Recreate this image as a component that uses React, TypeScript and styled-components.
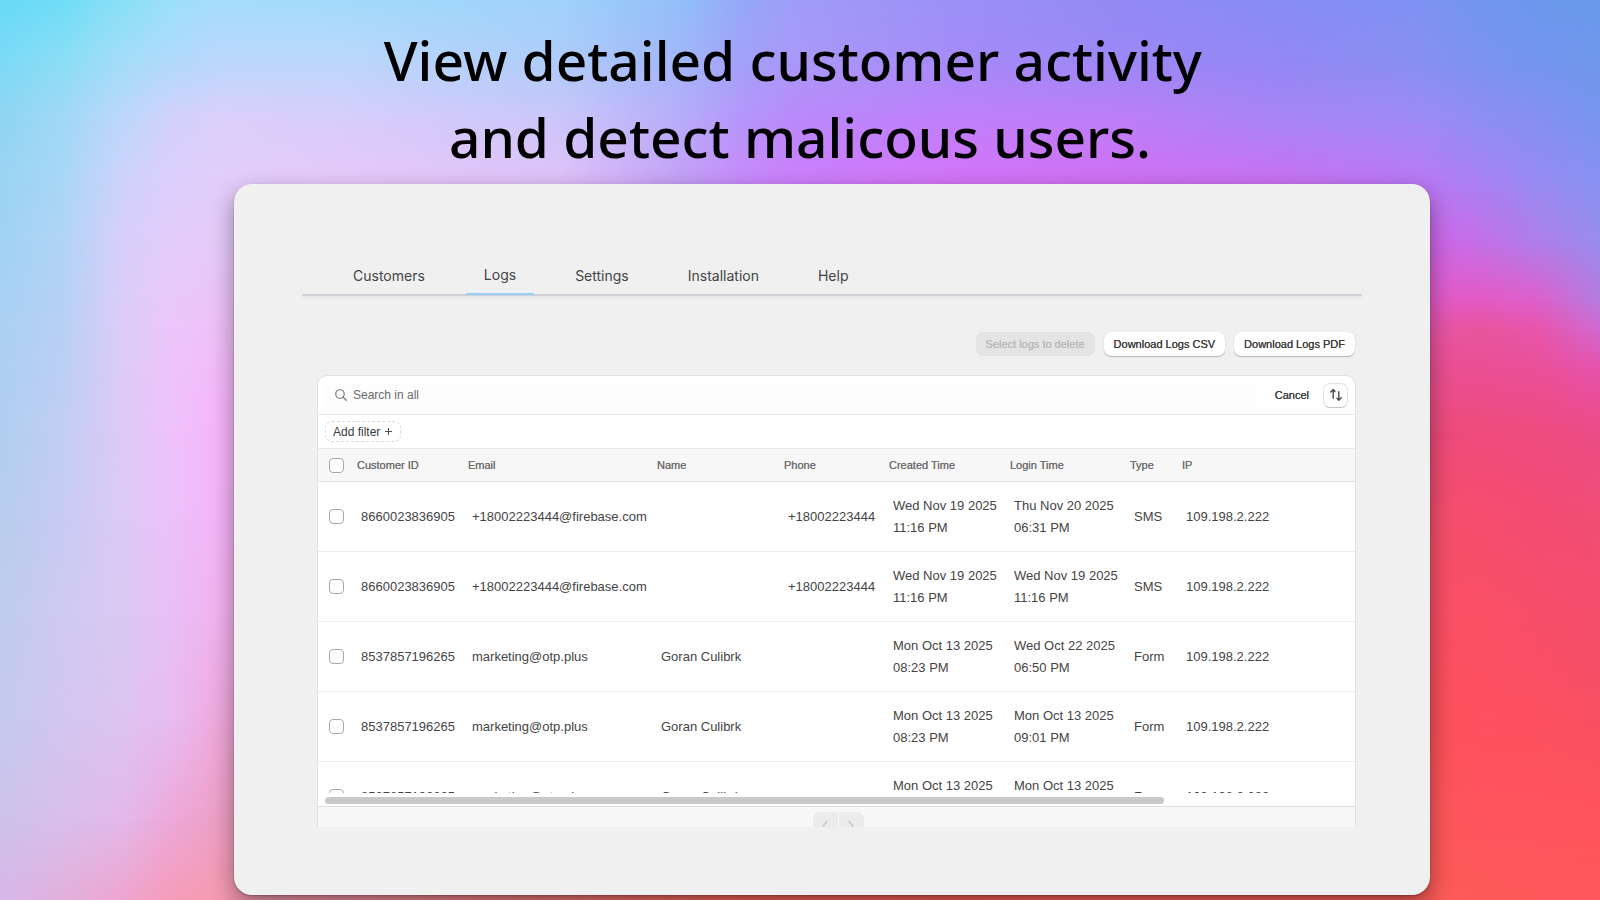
import React from 'react';
import styled, { createGlobalStyle, css } from 'styled-components';

/* Colour mesh of the backdrop: one horizontal gradient per row, rows fade into each other. */
const MESH_X = [0, 60, 120, 170, 220, 340, 560, 680, 740, 800, 960, 1120, 1280, 1420, 1480, 1540, 1600];
const MESH: Array<[number, string]> = [
  [0, '68daf7 70ddf7 88e0f6 9ce0f9 a4ddfb a2dbfb a0d2fb 92bff9 95a9f8 a09cf8 9c90f8 938af4 888df3 7f92f3 7296ef 6b98ec 6a98ec'],
  [60, '7cdaf6 8addf5 a2ddf8 b0dafb bbd7fc bcd8fb aeccf9 a2b6f9 a2a2f8 aa98f8 a58af8 9c88f6 9388f4 8890f2 7c93f0 7396ee 6f98ec'],
  [120, '8fd5f3 a0d8f6 bcd7fa d2d1fb dccffb d8cdfb ccc6fa b8acfa b596fa bb88fb c07ffa be7ef8 a884f6 9f8af4 8f8ef3 8690f2 7895ee'],
  [180, '9ad3f2 a8d7f6 cdd2fb dccffc e2cdfa e6c8fa dfc2f8 c4a0f6 c78bfa cc7efc d474f8 cf70f4 c872f2 b87af5 a882f4 968bf2 8892f2'],
  [240, 'a0d2f2 b0d4f6 d6cffa e3ccfb e5cbf9 e8c4fa e0b8f8 d0a0f6 d08bfa d07cf8 d66cf0 d466ec d264ea d065ea c470e8 ad80ea 9a8cee'],
  [300, 'a8d1f3 b4d1f5 dacdf9 e9c8fb ecc3f8 ecc0f8 e8b0f4 e09cf0 e080e8 e070e0 e060d0 e058c8 e058c8 e25ac8 e35ac4 dc60cc b57ce0'],
  [330, 'abd1f3 b8d0f4 dacdf8 ecc6fb efc0f8 efbcf8 ecacf0 e898e0 e880d8 e870d0 e860c0 e858b8 e855b0 e855a8 e8559c e855ac d268d0'],
  [370, 'adcff2 bbcff4 dbcbf7 edc4fb f3baf9 f3b4f8 f0a0e8 f08cd0 f078c0 f068b0 f058a0 ec5098 ea5090 ea5090 ea4f94 ea5098 e652ac'],
  [430, 'afcff0 c2cef4 dccaf6 eec2fb f7b4fb f5acf0 f298d8 f280c0 f270b0 f260a0 f05490 ee4c84 ec4c7c ec4c7c ee4b7c ee4b80 ec4c88'],
  [520, 'b8cdee c7cbf3 dbcaf5 eac2fa f5b4f8 f5a4e0 f48cc0 f474a8 f46898 f45c88 f45478 f44f70 f44f6a f44f6a f64d6e f24c72 f04e74'],
  [620, 'bfccee cfc9f2 d8c9f2 e8bff6 f2b2ee f2a0d0 f488a8 f47090 f66480 f65c74 f6546c f84f66 f94f64 f94f64 fa5064 f84e6a f44e6c'],
  [720, 'c5caee d2c6f0 dcc4f0 e8bcf1 efa9dc f09cc0 f48098 f46c80 f66070 f85868 f85460 fa505a fb5058 fb5058 fd5060 fc5060 f85062'],
  [820, 'cdc2ea d8bfea e3b9ea eca9da ee9fc4 f094b0 f47888 f46870 f66064 f85c60 fa585c fc585a fc5a58 fc5a58 ff545e ff545e ff545c'],
  [900, 'd6b6e8 e2b0dc eda5d0 f59cb8 f59ab0 f090a0 f07474 f46860 f46458 f66058 fa5c58 fc5c58 fc5c58 fc5c58 fe5a58 ff585a ff585a'],
];

const pct = (v: number, full: number) => `${Math.round((v / full) * 10000) / 100}%`;

const rowGradient = (colours: string) =>
  `linear-gradient(to right, ${colours
    .split(' ')
    .map((c, i) => `#${c} ${pct(MESH_X[i], 1600)}`)
    .join(', ')})`;

const GlobalStyle = createGlobalStyle`
  *, *::before, *::after { box-sizing: border-box; }
  body { margin: 0; font-family: "Liberation Sans", Arial, sans-serif; color: #444; }
  button, input { font: inherit; color: inherit; }
`;

const Page = styled.div`
  position: relative;
  isolation: isolate;
  min-height: 100vh;
  padding: 21px 170px 5px 234px;
  overflow: hidden;
`;

const Backdrop = styled.div`
  position: absolute;
  inset: 0;
  z-index: -1;
`;

const Band = styled.div<{ $fill: string; $from?: string; $to?: string }>`
  position: absolute;
  inset: 0;
  background: ${(p) => p.$fill};
  ${(p) =>
    p.$from &&
    css`
      mask-image: linear-gradient(to bottom, transparent ${p.$from}, #000 ${p.$to});
    `}
`;

const Headline = styled.h1`
  margin: 0 -170px 9px -234px;
  font: 500 55px/77px "Noto Sans", "Open Sans", sans-serif;
  color: #000;
  text-align: center;
  white-space: pre;
`;

const Panel = styled.main`
  padding: 71px 68px 68px;
  border-radius: 18px;
  background: #f0f0f0;
  box-shadow: 0 10px 24px rgba(0, 0, 0, 0.4), 0 1px 2px rgba(0, 0, 0, 0.25);
`;

const Tabs = styled.nav`
  display: flex;
  gap: 23px;
  height: 41px;
  padding-left: 33px;
  border-top: 1px solid #ededed;
  border-bottom: 2px solid #d3d1d8;
  box-shadow: 0 3px 3px -1px #e2e1e8;
`;

const Tab = styled.a<{ $active?: boolean }>`
  height: 39px;
  padding: 0 18px;
  font: 400 14px/40px Inter, sans-serif;
  color: #444;
  text-decoration: none;
  ${(p) =>
    p.$active &&
    css`
      line-height: 38px;
      border-bottom: 2px solid #98cff9;
    `}
`;

const Actions = styled.div`
  display: flex;
  justify-content: flex-end;
  gap: 9px;
  margin: 36px 7px 19px 0;
`;

const strongText = css`
  font-size: 11px;
  text-shadow: 0 0 0 currentColor;
`;

const ActionButton = styled.button`
  ${strongText}
  height: 24px;
  padding: 0 10px;
  border: 0;
  border-radius: 7px;
  background: #fff;
  color: #3c3c3c;
  box-shadow: 0 1px 1px rgba(0, 0, 0, 0.24), 0 0 1px rgba(0, 0, 0, 0.15);

  &:disabled {
    background: #e4e4e4;
    color: #b9b9b9;
    box-shadow: none;
  }
`;

const Card = styled.section`
  margin: 0 6px 0 15px;
  border: 1px solid #e1e1e1;
  border-bottom: 0;
  border-radius: 10px 10px 0 0;
  background: #fff;
  overflow: hidden;
`;

const SearchBar = styled.div`
  display: flex;
  align-items: center;
  height: 39px;
  padding: 0 7px;
  border-bottom: 1px solid #e9e9e9;
`;

const SearchField = styled.label`
  display: flex;
  flex: 1;
  align-items: center;
  gap: 6px;
  height: 25px;
  padding-left: 10px;
  border-radius: 6px;
  background: #fdfdfd;
`;

const SearchInput = styled.input`
  flex: 1;
  border: 0;
  padding: 0;
  outline: 0;
  background: none;
  font-size: 12px;

  &::placeholder {
    color: #6c6c6c;
    opacity: 1;
  }
`;

const CancelButton = styled.button`
  ${strongText}
  margin: 0 14px 0 19px;
  padding: 0;
  border: 0;
  background: none;
  color: #3c3c3c;
`;

const SortButton = styled.button`
  display: grid;
  place-items: center;
  width: 25px;
  height: 25px;
  padding: 0;
  border: 1px solid #e2e2e2;
  border-bottom-color: #c4c4c4;
  border-radius: 7px;
  background: #fff;
`;

const FilterBar = styled.div`
  display: flex;
  align-items: center;
  height: 33px;
  padding: 0 7px;
`;

const FilterButton = styled.button`
  display: flex;
  align-items: center;
  gap: 5px;
  height: 21px;
  padding: 0 8px 0 7px;
  border: 1px dashed #dadada;
  border-radius: 7px;
  background: #fff;
  font-size: 12px;
  color: #3c3c3c;
`;

const TableView = styled.div`
  height: 345px;
  overflow: hidden;
`;

const Table = styled.table`
  width: 100%;
  table-layout: fixed;
  border-collapse: separate;
  border-spacing: 0;
`;

const Col = styled.col<{ $width?: number }>`
  width: ${(p) => (p.$width ? `${p.$width}px` : 'auto')};
`;

const HeadCell = styled.th`
  ${strongText}
  height: 34px;
  padding: 0 0 0 8px;
  border-top: 1px solid #e9e9e9;
  border-bottom: 1px solid #e2e2e2;
  background: #f7f7f7;
  font-weight: 400;
  text-align: left;
  color: #707070;
  white-space: nowrap;

  &:first-child {
    padding-left: 11px;
  }
`;

const Cell = styled.td`
  height: 70px;
  padding: 0 0 0 12px;
  border-bottom: 1px solid #ececec;
  font-size: 13px;
  line-height: 22px;
  white-space: pre-line;

  &:first-child {
    padding-left: 11px;
  }
`;

const Check = styled.input`
  display: block;
  appearance: none;
  width: 15px;
  height: 15px;
  margin: 0;
  border: 1px solid #a8a8a8;
  border-radius: 4px;
  background: #fff;
`;

const ScrollTrack = styled.div`
  padding: 4px 7px 2px;
`;

const ScrollThumb = styled.div`
  width: 82%;
  height: 7px;
  border-radius: 4px;
  background: #c9c9c9;
`;

const Footer = styled.footer`
  display: flex;
  align-items: flex-start;
  justify-content: center;
  gap: 1px;
  height: 21px;
  padding: 5px 0 0 3px;
  border-top: 1px solid #dedede;
  background: #f7f7f7;
  overflow: hidden;
`;

const PageButton = styled.button<{ $side: 'left' | 'right' }>`
  display: grid;
  flex: none;
  place-items: center;
  width: 25px;
  height: 28px;
  padding: 0;
  border: 0;
  border-radius: ${(p) => (p.$side === 'left' ? '7px 0 0 7px' : '0 7px 7px 0')};
  background: #ebebeb;
  color: #c8c8c8;
`;

const SearchIcon = () => (
  <svg width="12" height="12" viewBox="0 0 13 13" fill="none" stroke="#777" strokeWidth="1.3" strokeLinecap="round" aria-hidden>
    <circle cx="5.4" cy="5.4" r="4.6" />
    <path d="M8.9 8.9 12.2 12.2" />
  </svg>
);

const PlusIcon = () => (
  <svg width="7" height="7" viewBox="0 0 7 7" stroke="#4a4a4a" strokeWidth="1.1" strokeLinecap="round" aria-hidden>
    <path d="M3.5 .5v6M.5 3.5h6" />
  </svg>
);

const SortIcon = () => (
  <svg width="14" height="14" viewBox="0 0 14 14" fill="none" stroke="#4a4a4a" strokeWidth="1.4" strokeLinecap="round" strokeLinejoin="round" aria-hidden>
    <path d="M1.8 4 4.2 1.6 6 3.4M4.2 1.8v8.4M8 10.2l1.8 2 2.4-2.4M9.8 12V3.8" />
  </svg>
);

const Chevron = ({ d }: { d: string }) => (
  <svg width="8" height="12" viewBox="0 0 8 12" fill="none" stroke="currentColor" strokeWidth="1.4" strokeLinecap="round" strokeLinejoin="round" aria-hidden>
    <path d={d} />
  </svg>
);

const TABS = ['Customers', 'Logs', 'Settings', 'Installation', 'Help'];
const COLUMNS = ['Customer ID', 'Email', 'Name', 'Phone', 'Created Time', 'Login Time', 'Type', 'IP'];
const WIDTHS = [31, 111, 189, 127, 105, 121, 120, 52];
const IP = '109.198.2.222';
const ROWS = [
  ['8660023836905', '+18002223444@firebase.com', '', '+18002223444', 'Wed Nov 19 2025\n11:16 PM', 'Thu Nov 20 2025\n06:31 PM', 'SMS', IP],
  ['8660023836905', '+18002223444@firebase.com', '', '+18002223444', 'Wed Nov 19 2025\n11:16 PM', 'Wed Nov 19 2025\n11:16 PM', 'SMS', IP],
  ['8537857196265', 'marketing@otp.plus', 'Goran Culibrk', '', 'Mon Oct 13 2025\n08:23 PM', 'Wed Oct 22 2025\n06:50 PM', 'Form', IP],
  ['8537857196265', 'marketing@otp.plus', 'Goran Culibrk', '', 'Mon Oct 13 2025\n08:23 PM', 'Mon Oct 13 2025\n09:01 PM', 'Form', IP],
  ['8537857196265', 'marketing@otp.plus', 'Goran Culibrk', '', 'Mon Oct 13 2025\n08:23 PM', 'Mon Oct 13 2025\n08:23 PM', 'Form', IP],
];

export default function App() {
  return (
    <Page>
      <GlobalStyle />
      <Backdrop aria-hidden>
        {MESH.map(([y, colours], i) => (
          <Band
            key={y}
            $fill={rowGradient(colours)}
            $from={i ? pct(MESH[i - 1][0], 900) : undefined}
            $to={i ? pct(y, 900) : undefined}
          />
        ))}
      </Backdrop>
      <Headline>{'View detailed customer activity \nand detect malicous users.'}</Headline>
      <Panel>
        <Tabs>
          {TABS.map((t) => (
            <Tab key={t} href="#" $active={t === 'Logs'}>
              {t}
            </Tab>
          ))}
        </Tabs>
        <Actions>
          <ActionButton disabled>Select logs to delete</ActionButton>
          <ActionButton>Download Logs CSV</ActionButton>
          <ActionButton>Download Logs PDF</ActionButton>
        </Actions>
        <Card>
          <SearchBar>
            <SearchField>
              <SearchIcon />
              <SearchInput type="text" placeholder="Search in all" aria-label="Search in all" />
            </SearchField>
            <CancelButton>Cancel</CancelButton>
            <SortButton aria-label="Sort">
              <SortIcon />
            </SortButton>
          </SearchBar>
          <FilterBar>
            <FilterButton>
              Add filter <PlusIcon />
            </FilterButton>
          </FilterBar>
          <TableView>
            <Table>
              <colgroup>
                {WIDTHS.map((w, i) => (
                  <Col key={i} $width={w} />
                ))}
                <Col />
              </colgroup>
              <thead>
                <tr>
                  <HeadCell>
                    <Check type="checkbox" aria-label="Select all logs" />
                  </HeadCell>
                  {COLUMNS.map((c) => (
                    <HeadCell key={c}>{c}</HeadCell>
                  ))}
                </tr>
              </thead>
              <tbody>
                {ROWS.map((row, r) => (
                  <tr key={r}>
                    <Cell>
                      <Check type="checkbox" aria-label={`Select log ${r + 1}`} />
                    </Cell>
                    {row.map((value, c) => (
                      <Cell key={c}>{value}</Cell>
                    ))}
                  </tr>
                ))}
              </tbody>
            </Table>
          </TableView>
          <ScrollTrack>
            <ScrollThumb />
          </ScrollTrack>
          <Footer>
            <PageButton $side="left" disabled aria-label="Previous page">
              <Chevron d="M6 1.5 2 6l4 4.5" />
            </PageButton>
            <PageButton $side="right" disabled aria-label="Next page">
              <Chevron d="M2 1.5 6 6l-4 4.5" />
            </PageButton>
          </Footer>
        </Card>
      </Panel>
    </Page>
  );
}
